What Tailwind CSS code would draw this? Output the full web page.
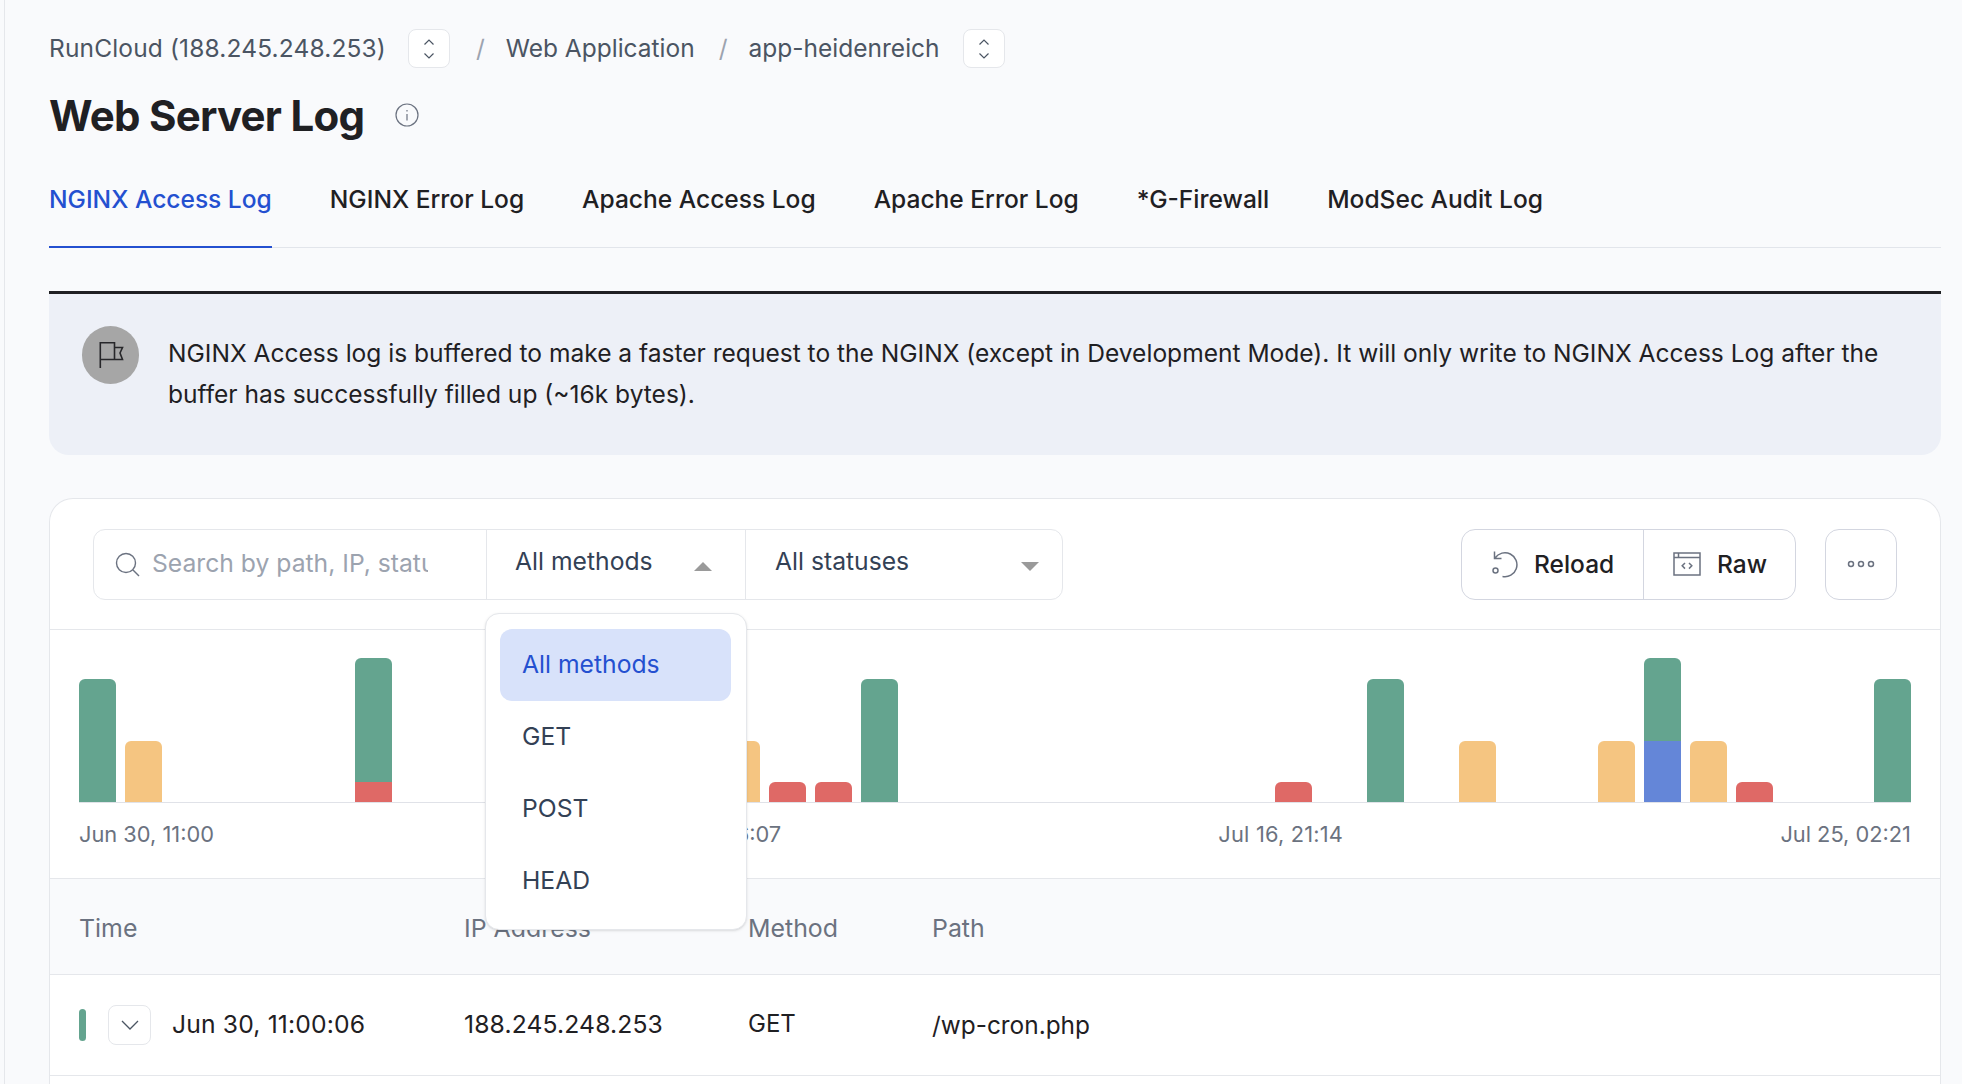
<!DOCTYPE html>
<html lang="en">
<head>
    <meta charset="UTF-8">
    <title>Web Server Log</title>
    <script src="https://cdn.jsdelivr.net/npm/@tailwindcss/browser@4"></script>
    <style>
        body { font-family: Inter, 'Liberation Sans', sans-serif; }
    </style>
</head>
<body class="bg-[#f9fafc] h-screen overflow-hidden">
<div class="ml-[4px] border-l border-[#e5e7eb] h-full pl-[44px] pr-[21px] pt-[29px]">

    <!-- breadcrumb -->
    <nav class="flex items-center h-[39px] text-[24.5px] text-[#4b5563]">
        <span class="tracking-[0.15px]">RunCloud (188.245.248.253)</span>
        <button class="ml-[22px] w-[42px] h-[39px] bg-white border border-[#e5e7eb] rounded-lg flex items-center justify-center">
            <svg width="12" height="22" viewBox="0 0 12 22" fill="none" stroke="#4b5563" stroke-width="1.2"><path d="M1.5 6.5L6 2l4.500 4.500M1.500 15.500L6 20l4.500-4.500"/></svg>
        </button>
        <span class="ml-[26px] text-[#9ca3af]">/</span>
        <span class="ml-[21px]">Web Application</span>
        <span class="ml-[24px] text-[#9ca3af]">/</span>
        <span class="ml-[21px]">app-heidenreich</span>
        <button class="ml-[23px] w-[42px] h-[39px] bg-white border border-[#e5e7eb] rounded-lg flex items-center justify-center">
            <svg width="12" height="22" viewBox="0 0 12 22" fill="none" stroke="#4b5563" stroke-width="1.2"><path d="M1.5 6.5L6 2l4.500 4.500M1.500 15.500L6 20l4.500-4.500"/></svg>
        </button>
    </nav>

    <!-- title -->
    <div class="flex items-center mt-[20px] h-[58px]">
        <h1 class="text-[42px] font-bold text-[#1f2023] tracking-[-0.018em] -mt-[3px]">Web Server Log</h1>
        <svg class="ml-[31px] -mt-[4px]" width="24" height="24" viewBox="0 0 24 24" fill="none" stroke="#6b7280" stroke-width="1.2"><circle cx="12" cy="12" r="11"/><path d="M12 11v6.500M12 7v1.500"/></svg>
    </div>

    <!-- tabs -->
    <div class="flex gap-[58px] mt-[32px] border-b border-[#e2e5eb] h-[70px] text-[24.55px] font-medium text-[#1f2023]">
        <a class="h-[70px] pt-[3px] border-b-2 border-[#2450d0] text-[#2450d0]">NGINX Access Log</a>
        <a class="pt-[3px]">NGINX Error Log</a>
        <a class="pt-[3px]">Apache Access Log</a>
        <a class="pt-[3px]">Apache Error Log</a>
        <a class="pt-[3px]">*G-Firewall</a>
        <a class="pt-[3px]">ModSec Audit Log</a>
    </div>

    <!-- notice -->
    <div class="mt-[43px] h-[164px] bg-[#edf0f7] border-t-[3px] border-[#1f2023] rounded-b-[20px] flex pl-[33px] pr-[40px] pt-[32px]">
        <div class="w-[57px] h-[58px] shrink-0 rounded-full bg-[#a6a6a6] flex items-center justify-center">
            <svg width="28" height="28" viewBox="0 0 28 28" fill="none" stroke="#27272a" stroke-width="1.600"><path d="M3.300 27V1.800h14.200v16.700H3.300M17.500 6.500h8l-2.500 5.500 2.500 6.500h-8"/></svg>
        </div>
        <p class="ml-[29px] text-[24.55px] leading-[41px] text-[#1f2023] mt-[7px]">NGINX Access log is buffered to make a faster request to the NGINX (except in Development Mode). It will only write to NGINX Access Log after the buffer has successfully filled up (~16k bytes).</p>
    </div>

    <!-- log card -->
    <div class="relative mt-[43px] bg-white border border-b-0 border-[#e5e7eb] rounded-t-[24px] h-[586px]">

        <!-- toolbar -->
        <div class="flex items-center justify-between h-[131px] pl-[43px] pr-[43px] border-b border-[#e5e7eb]">
            <div class="flex h-[71px] w-[970px] border border-[#e5e7eb] rounded-xl">
                <div class="w-[393px] flex items-center pl-[21px] border-r border-[#e5e7eb]">
                    <svg width="25" height="25" viewBox="0 0 25 25" fill="none" stroke="#6b7280" stroke-width="1.400"><circle cx="11" cy="11" r="9.500"/><path d="M18 18l6 6"/></svg>
                    <input class="ml-[12px] w-[276px] text-[24.7px] outline-none placeholder:text-[#9ca3af]" placeholder="Search by path, IP, status, etc">
                </div>
                <div class="w-[259px] flex items-center justify-between pl-[28px] pr-[33px] border-r border-[#e5e7eb] text-[24.7px] text-[#334155]">
                    <span class="-mt-[5px]">All methods</span>
                    <svg class="mt-[5px]" width="18" height="9" viewBox="0 0 18 9" fill="#9a9a9a"><path d="M9 0l9 9H0z"/></svg>
                </div>
                <div class="flex-1 flex items-center justify-between pl-[29px] pr-[23px] text-[24.7px] text-[#334155]">
                    <span class="-mt-[5px]">All statuses</span>
                    <svg class="mt-[5px]" width="18" height="9" viewBox="0 0 18 9" fill="#9a9a9a"><path d="M9 9l9-9H0z"/></svg>
                </div>
            </div>
            <div class="flex gap-[29px]">
                <div class="flex h-[71px] border border-[#d3d6e0] rounded-[14px] text-[24.5px] font-medium text-[#1f2023]">
                    <button class="w-[182px] flex items-center pl-[30px] gap-[15px] border-r border-[#d3d6e0]">
                        <svg width="27" height="28" viewBox="0 0 27 28" fill="none" stroke="#6b7280" stroke-width="1.500"><path d="M3 8A12 12 0 1 1 10.500 26.500M2.500 1.500V8.500H9.500"/><circle cx="3.500" cy="20.500" r="2.500"/></svg>
                        Reload
                    </button>
                    <button class="w-[151px] flex items-center pl-[29px] gap-[16px]">
                        <svg width="28" height="24" viewBox="0 0 28 24" fill="none" stroke="#6b7280" stroke-width="1.500"><rect x="1" y="1" width="26" height="22"/><path d="M1 5.500h26M5.500 1v4.500M12 11l-2.800 2.800 2.800 2.800M16 11l2.800 2.800-2.800 2.800"/></svg>
                        Raw
                    </button>
                </div>
                <button class="w-[72px] h-[71px] border border-[#d3d6e0] rounded-[14px] flex items-center justify-center">
                    <svg width="28" height="8" viewBox="0 0 28 8" fill="none" stroke="#6b7280" stroke-width="1.500"><circle cx="4" cy="4" r="2.500"/><circle cx="14" cy="4" r="2.500"/><circle cx="24" cy="4" r="2.500"/></svg>
                </button>
            </div>
        </div>

        <!-- chart -->
        <div class="h-[249px] px-[29px] pt-[23px] border-b border-[#e5e7eb]">
            <div id="bars" class="flex items-end gap-[9.03px] h-[150px] border-b border-[#e0e2e8]"></div>
            <div class="flex justify-between mt-[18px] text-[21.8px] leading-[26px] text-[#6b7280]">
                <span>Jun 30, 11:00</span>
                <span class="w-[130px] text-right">Jul 8, 16:07</span>
                <span class="tracking-[0.2px]">Jul 16, 21:14</span>
                <span>Jul 25, 02:21</span>
            </div>
        </div>

        <!-- table -->
        <div class="flex items-center h-[96px] pl-[29px] pt-[4px] bg-[#f9fafc] border-b border-[#e5e7eb] text-[24.9px] text-[#6b7280]">
            <span class="w-[385px]">Time</span>
            <span class="w-[284px]">IP Address</span>
            <span class="w-[184px]">Method</span>
            <span>Path</span>
        </div>
        <div class="flex items-center h-[101px] pl-[29px] border-b border-[#e5e7eb] text-[24.7px] text-[#1f2023]">
            <div class="w-[385px] flex items-center">
                <span class="w-[7px] h-[32px] rounded-full bg-[#64a48f]"></span>
                <button class="ml-[22px] w-[43px] h-[40px] border border-[#e5e7eb] rounded-lg flex items-center justify-center">
                    <svg width="18" height="10" viewBox="0 0 18 10" fill="none" stroke="#4b5563" stroke-width="1.300"><path d="M1 1l8 8 8-8"/></svg>
                </button>
                <span class="ml-[21px] tracking-[0.15px]">Jun 30, 11:00:06</span>
            </div>
            <span class="w-[284px] tracking-[0.13px]">188.245.248.253</span>
            <span class="w-[184px] text-[24px] -mt-[2px]">GET</span>
            <span class="text-[24.4px]">/wp-cron.php</span>
        </div>

        <!-- methods dropdown -->
        <div class="absolute left-[435px] top-[114px] w-[262px] h-[317px] bg-white border border-[#e5e7eb] rounded-[14px] shadow-sm pl-[14px] pr-[15px] pt-[15px] text-[24.7px] text-[#334155]">
            <div class="h-[72px] flex items-center pl-[22px] rounded-[12px] bg-[#d8e2fa] text-[#2450d0]">All methods</div>
            <div class="h-[72px] flex items-center pl-[22px]">GET</div>
            <div class="h-[72px] flex items-center pl-[22px]">POST</div>
            <div class="h-[72px] flex items-center pl-[22px]">HEAD</div>
        </div>
    </div>
</div>

<script>
    // slot index -> segments, top to bottom: [class, height]
    const green = 'bg-[#64a48f]', orange = 'bg-[#f5c581]', red = 'bg-[#df6966]', blue = 'bg-[#6486d8]';
    const data = {
        0: [[green, 123]], 1: [[orange, 61]], 6: [[green, 124], [red, 20]],
        14: [[orange, 61]], 15: [[red, 20]], 16: [[red, 20]], 17: [[green, 123]],
        26: [[red, 20]], 28: [[green, 123]], 30: [[orange, 61]], 33: [[orange, 61]],
        34: [[green, 83], [blue, 61]], 35: [[orange, 61]], 36: [[red, 20]], 39: [[green, 123]]
    };
    const bars = document.getElementById('bars');
    for (let i = 0; i < 40; i++) {
        const bar = document.createElement('div');
        bar.className = 'w-[37px] shrink-0 rounded-t-[6px] overflow-hidden';
        (data[i] || []).forEach(([color, height]) => {
            const seg = document.createElement('div');
            seg.className = color;
            seg.style.height = height + 'px';
            bar.appendChild(seg);
        });
        bars.appendChild(bar);
    }
</script>
</body>
</html>
